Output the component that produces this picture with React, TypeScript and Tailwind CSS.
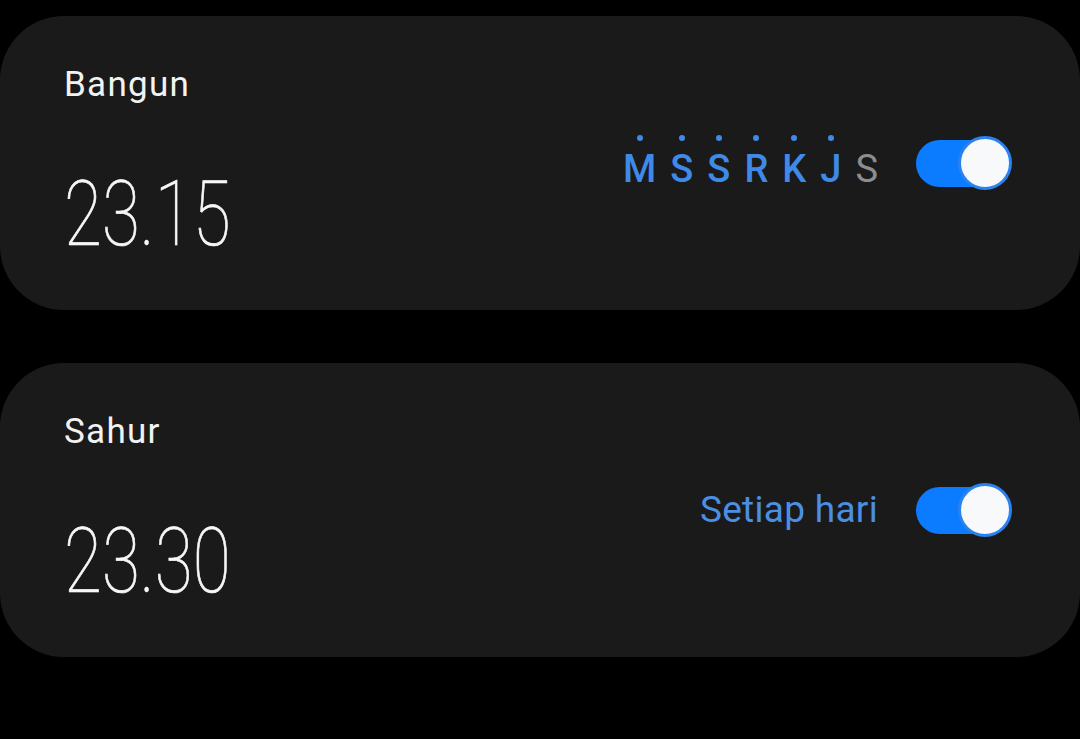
import React from 'react'

type Alarm = {
  label: string
  time: string
  days?: { letter: string; active: boolean }[]
  repeat?: string
  on: boolean
}

const alarms: Alarm[] = [
  {
    label: 'Bangun',
    time: '23.15',
    days: [
      { letter: 'M', active: true },
      { letter: 'S', active: true },
      { letter: 'S', active: true },
      { letter: 'R', active: true },
      { letter: 'K', active: true },
      { letter: 'J', active: true },
      { letter: 'S', active: false },
    ],
    on: true,
  },
  { label: 'Sahur', time: '23.30', repeat: 'Setiap hari', on: true },
]

function Toggle({ on }: { on: boolean }) {
  return (
    <div className="relative w-[96px] h-[54px] shrink-0">
      <div
        className={`absolute left-0 top-[4px] w-[90px] h-[47px] rounded-full ${
          on ? 'bg-[#0b7bff]' : 'bg-[#555]'
        }`}
      />
      <div className="absolute right-0 top-0 w-[54px] h-[54px] rounded-full bg-[#f8f9fb] border-[3px] border-[#2a82f0]" />
    </div>
  )
}

function DayRow({ days }: { days: NonNullable<Alarm['days']> }) {
  return (
    <div className="flex gap-[14px] -mt-[1px]">
      {days.map((d, i) => (
        <div key={i} className="flex flex-col items-center">
          <div
            className={`w-[6px] h-[6px] rounded-full mb-[9px] ${
              d.active ? 'bg-[#3f8ae8]' : 'bg-transparent'
            }`}
          />
          <span
            className={`text-[38px] leading-[38px] ${
              d.active ? 'font-medium text-[#3f8ae8]' : 'font-normal text-[#8d8d8d]'
            }`}
          >
            {d.letter}
          </span>
        </div>
      ))}
    </div>
  )
}

function AlarmCard({ alarm }: { alarm: Alarm }) {
  return (
    <div className="flex justify-between items-start h-[294px] rounded-[64px] bg-[#1a1a1a] pl-[64px] pr-[68px]">
      {/* label + time */}
      <div className="flex flex-col pt-[49px]">
        <span className="text-[35px] leading-[40px] tracking-[1.3px] text-[#f2f2f2]">{alarm.label}</span>
        <span className="mt-[65px] text-[90px] leading-[90px] font-thin text-[#f7f7f7] [-webkit-text-stroke:0.7px_#f7f7f7] inline-block origin-left scale-x-[0.77]">
          {alarm.time}
        </span>
      </div>

      {/* repeat + switch */}
      <div className="flex items-start gap-[38px] pt-[120px]">
        {alarm.days && <DayRow days={alarm.days} />}
        {alarm.repeat && (
          <span className="text-[37px] leading-[54px] tracking-[0.3px] text-[#4a8fe4]">{alarm.repeat}</span>
        )}
        <Toggle on={alarm.on} />
      </div>
    </div>
  )
}

export default function App() {
  return (
    <div
      className="w-[1080px] h-[739px] bg-black pt-[16px] flex flex-col gap-[53px] overflow-hidden"
      style={{ fontFamily: 'Roboto, "Noto Sans", sans-serif' }}
    >
      {alarms.map((a) => (
        <AlarmCard key={a.label} alarm={a} />
      ))}
    </div>
  )
}
